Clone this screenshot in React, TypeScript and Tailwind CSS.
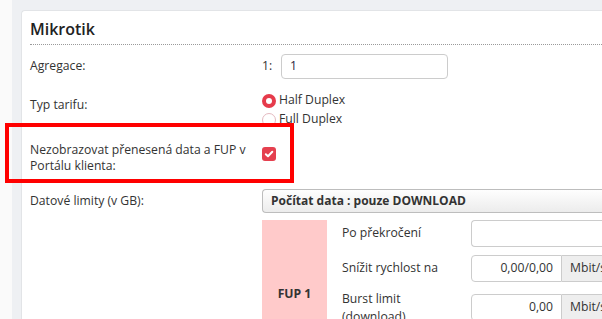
import React from 'react';

const Radio: React.FC<{ checked?: boolean; label: string }> = ({ checked, label }) => (
  <label className="flex items-center h-[19px] gap-[3px]">
    {checked ? (
      <span className="w-[14px] h-[14px] shrink-0 rounded-full bg-[#e63b4b] flex items-center justify-center">
        <span className="w-[6px] h-[6px] rounded-full bg-white" />
      </span>
    ) : (
      <span className="w-[14px] h-[14px] shrink-0 rounded-full border border-[#e4b9bf] bg-white" />
    )}
    <span>{label}</span>
  </label>
);

const App: React.FC = () => {
  return (
    <div
      className="relative w-[602px] h-[319px] overflow-hidden flex bg-[#eef0f3] text-[12.2px] text-[#333]"
      style={{ fontFamily: '"Open Sans", "Noto Sans", sans-serif' }}
    >
      {/* left page edge */}
      <div className="w-[12px] shrink-0 bg-[#fafafa]" />

      <div className="flex-1 min-w-0 pt-[10px] pl-[9px]">
        <div className="h-full bg-white rounded-tl-[4px] border-t border-l border-[#e2e4e7] pl-[8px] pt-[6px]">
          {/* Heading */}
          <div className="border-b border-dotted border-[#9a9a9a] pb-[3px]">
            <h2 className="text-[16px] leading-[24px] font-semibold text-[#222]">Mikrotik</h2>
          </div>

          {/* Agregace */}
          <div className="flex items-center mt-[9px] h-[25px]">
            <div className="w-[232px] shrink-0">Agregace:</div>
            <span className="w-[19px] shrink-0">1:</span>
            <div className="w-[167px] shrink-0 h-[25px] border border-[#ccc] rounded-[4px] px-[8px] flex items-center text-[#2a2440]">1</div>
          </div>

          {/* Typ tarifu */}
          <div className="flex mt-[12px]">
            <div className="w-[232px] shrink-0 pt-[5px] leading-[18px]">Typ tarifu:</div>
            <div className="flex flex-col">
              <Radio checked label="Half Duplex" />
              <Radio label="Full Duplex" />
            </div>
          </div>

          {/* Nezobrazovat */}
          <div className="flex mt-[13px] items-start">
            <div className="w-[232px] shrink-0 leading-[16px]">
              Nezobrazovat přenesená data a FUP v<br />Portálu klienta:
            </div>
            <span className="mt-[5px] w-[14px] h-[14px] shrink-0 rounded-[3px] bg-[#e5404f] flex items-center justify-center">
              <svg width="10" height="10" viewBox="0 0 10 10">
                <path d="M1.8 5.2 L4 7.3 L8.3 2.8" stroke="white" strokeWidth="2" fill="none" strokeLinecap="round" strokeLinejoin="round" />
              </svg>
            </span>
          </div>

          {/* Datové limity */}
          <div className="flex items-center mt-[15px]">
            <div className="w-[232px] shrink-0">Datové limity (v GB):</div>
            <div className="flex-1 h-[24px] border border-[#bdbdbd] rounded-l-[4px] border-r-0 bg-gradient-to-b from-[#fefefe] to-[#ececec] px-[8px] flex items-center text-[12px] font-bold text-[#333] whitespace-nowrap">
              Počítat data : pouze DOWNLOAD
            </div>
          </div>

          {/* FUP table */}
          <div className="flex ml-[232px] mt-[7px]">
            <div className="w-[65px] shrink-0 h-[110px] bg-[#ffcaca] flex items-center justify-center font-bold pt-[38px]">FUP 1</div>
            <div className="flex-1 min-w-0 pl-[15px] flex flex-col">
              <div className="flex items-center h-[27px]">
                <div className="w-[129px] shrink-0">Po překročení</div>
                <div className="flex-1 h-[27px] border border-[#ccc] border-r-0 rounded-l-[4px]" />
              </div>
              <div className="flex items-center h-[27px] mt-[8px]">
                <div className="w-[129px] shrink-0">Snížit rychlost na</div>
                <div className="w-[91px] shrink-0 h-[27px] border border-[#ccc] rounded-l-[4px] flex items-center justify-end pr-[8px]">0,00/0,00</div>
                <div className="flex-1 h-[27px] border border-l-0 border-r-0 border-[#ccc] bg-[#eeeeee] flex items-center pl-[8px] whitespace-nowrap">Mbit/s</div>
              </div>
              <div className="flex items-start mt-[8px]">
                <div className="w-[129px] shrink-0 leading-[18px]">Burst limit<br />(download)</div>
                <div className="w-[91px] shrink-0 h-[27px] mt-[4px] border border-[#ccc] rounded-l-[4px] flex items-center justify-end pr-[8px]">0,00</div>
                <div className="flex-1 h-[27px] mt-[4px] border border-l-0 border-r-0 border-[#ccc] bg-[#eeeeee] flex items-center pl-[8px] whitespace-nowrap">Mbit/s</div>
              </div>
            </div>
          </div>
        </div>
      </div>

      {/* annotation highlight */}
      <div className="absolute left-[5px] top-[123px] w-[289px] h-[60px] border-4 border-[#ff0000]" />
    </div>
  );
};

export default App;
